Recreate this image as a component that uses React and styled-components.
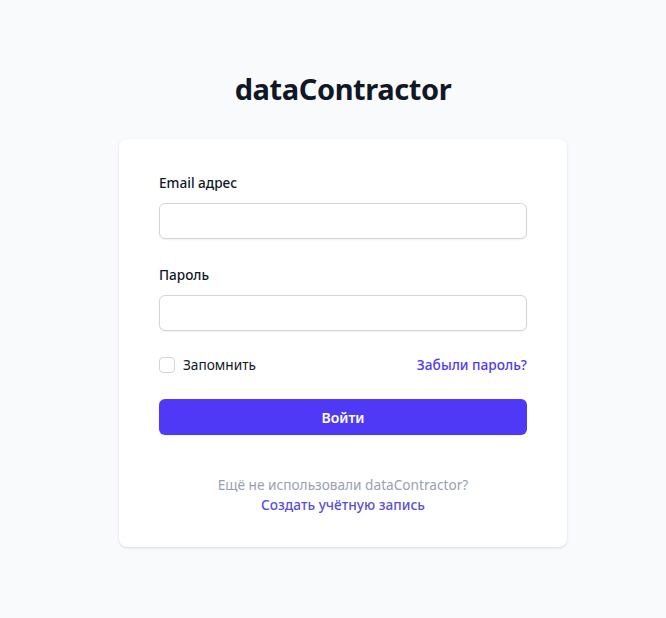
import styled, { createGlobalStyle } from "styled-components";

const GlobalStyle = createGlobalStyle`
	html, body {
		margin: 0;
		padding: 0;
		background: #f9fafb;
	}
	body {
		font-family: "Noto Sans", "Open Sans", Arial, sans-serif;
		color: #101828;
	}
	* {
		box-sizing: border-box;
	}
`;

const Page = styled.div`
	min-height: 100vh;
	display: flex;
	flex-direction: column;
	justify-content: center;
	align-items: center;
	padding-left: 20px;
`;

const Title = styled.h2`
	margin: 0;
	font-size: 29px;
	line-height: 36px;
	font-weight: 700;
	letter-spacing: -0.4px;
	color: #101828;
	text-align: center;
`;

const Card = styled.div`
	margin-top: 32px;
	width: 448px;
	background: #ffffff;
	border-radius: 8px;
	box-shadow: 0 1px 3px rgba(0, 0, 0, 0.1), 0 1px 2px -1px rgba(0, 0, 0, 0.1);
	padding: 32px 40px;
`;

const Form = styled.form`
	display: flex;
	flex-direction: column;
	gap: 24px;
`;

const Field = styled.div`
	display: flex;
	flex-direction: column;
	gap: 8px;
`;

const Label = styled.label`
	font-size: 13.6px;
	line-height: 24px;
	font-weight: 500;
	color: #101828;
`;

const Input = styled.input`
	height: 36px;
	width: 100%;
	border: 1px solid #d1d5dc;
	border-radius: 6px;
	background: #fff;
	padding: 6px 12px;
	font: inherit;
	font-size: 14px;
	box-shadow: 0 1px 2px rgba(0, 0, 0, 0.06);
	outline: none;
`;

const Row = styled.div`
	display: flex;
	justify-content: space-between;
	align-items: center;
	height: 20px;
`;

const Remember = styled.label`
	display: flex;
	align-items: center;
	gap: 8px;
	font-size: 13.65px;
	line-height: 20px;
	color: #101828;
`;

const Box = styled.span`
	width: 16px;
	height: 16px;
	border: 1px solid #d1d5dc;
	border-radius: 4px;
	background: #fff;
`;

const Link = styled.a`
	font-size: 13.7px;
	line-height: 20px;
	font-weight: 500;
	color: ${(p) => (p.$soft ? "#5a4fd6" : "#4f39f6")};
	text-decoration: none;
`;

const Button = styled.button`
	height: 36px;
	width: 100%;
	border: none;
	border-radius: 6px;
	background: #4f39f6;
	color: #fff;
	font: inherit;
	font-size: 14px;
	font-weight: 600;
	box-shadow: 0 1px 2px rgba(0, 0, 0, 0.06);
`;

const Footer = styled.p`
	margin: 40px 0 0;
	text-align: center;
	font-size: 13.65px;
	line-height: 20px;
	color: #99a1af;
`;

export default function App() {
	return (
		<>
			<GlobalStyle />
			<Page>
				<Title>dataContractor</Title>
				<Card>
					<Form onSubmit={(e) => e.preventDefault()}>
						<Field>
							<Label>Email адрес</Label>
							<Input type="email" />
						</Field>
						<Field>
							<Label>Пароль</Label>
							<Input type="password" />
						</Field>
						<Row>
							<Remember>
								<Box />
								Запомнить
							</Remember>
							<Link href="#">Забыли пароль?</Link>
						</Row>
						<Button type="submit">Войти</Button>
					</Form>
					<Footer>
						Ещё не использовали dataContractor?
						<br />
						<Link href="#" $soft>
							Создать учётную запись
						</Link>
					</Footer>
				</Card>
			</Page>
		</>
	);
}
